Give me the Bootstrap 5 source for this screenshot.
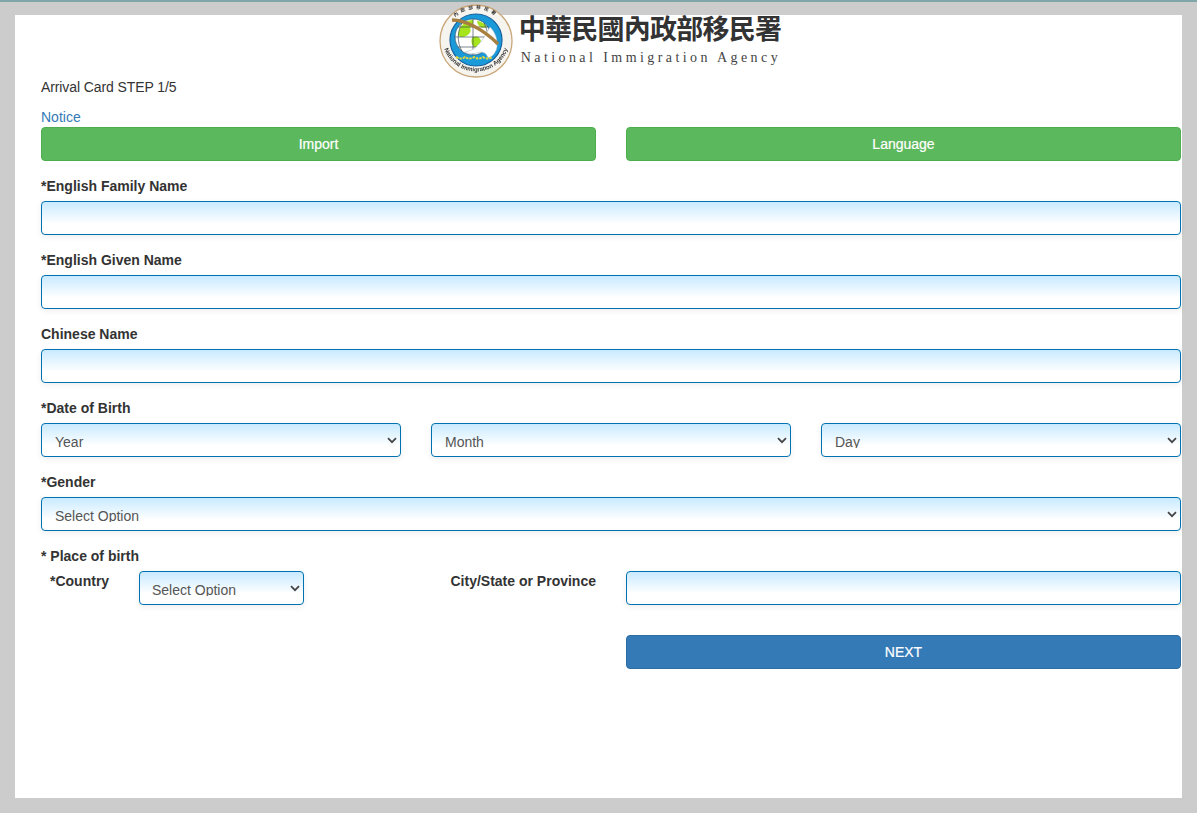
<!DOCTYPE html>
<html lang="en">
<head>
<meta charset="utf-8">
<title>Arrival Card</title>
<link rel="stylesheet" href="https://cdn.jsdelivr.net/npm/bootstrap@5.3.0/dist/css/bootstrap.min.css">
<style>
html, body { height: 100%; }
body { margin: 0; background: #ccc; font-family: "Liberation Sans", Arial, sans-serif; font-size: 14px; line-height: 20px; color: #333; border-top: 2px solid #7fa6a8; overflow: hidden; display: flow-root; }
.sheet { background: #fff; margin: 13px 15px 0; height: 783px; padding: 0 1px 0 26px; display: flow-root; }
.brand { margin: -11px 0 0 -2px; height: 73px; gap: 6px; }
.emblem { filter: blur(.35px); }
.brand-zh { font-family: "Noto Sans CJK TC", "Noto Sans CJK SC", sans-serif; font-size: 27px; line-height: 30px; font-weight: 700; letter-spacing: -.75px; color: #333; margin-top: 9px; white-space: nowrap; }
.brand-en { font-family: "Liberation Serif", serif; font-size: 14px; line-height: 16px; letter-spacing: 3.42px; color: #444; margin: 7px 0 0 2px; white-space: nowrap; }
.step-line { height: 20px; letter-spacing: -.1px; }
.notice-line { margin-top: 10px; height: 20px; }
.notice-line a { color: #337ab7; text-decoration: none; }
.form-row { --bs-gutter-x: 30px; --bs-gutter-y: 0; }
.act { display: block; width: 100%; height: 34px; padding: 6px 12px; font-size: 14px; line-height: 20px; border-radius: 4px; color: #fff; -webkit-text-stroke: .2px #fff; }
.act:hover, .act:focus { color: #fff; }
.act-green { background: #5cb85c; border: 1px solid #4cae4c; }
.act-blue { background: #337ab7; border: 1px solid #2e6da4; }
.block { margin-top: 15px; }
.field-label { display: block; margin: 0 0 5px; font-weight: 700; line-height: 20px; font-size: 14px; color: #333; }
.soft.form-control, .soft.form-select { height: 34px; min-height: 34px; font-size: 14px; color: #555; border: 1px solid #0072b1; border-radius: 4px; box-shadow: 0 2px 6px rgba(0,0,0,.07); }
.soft.form-control { padding: 6px 12px; background: linear-gradient(to bottom, #c8eaff 0%, #fff 68%); }
.soft.form-select { padding: 11px 24px 8px 13px; line-height: 14px; background-color: #fff; background-image: url("data:image/svg+xml,%3Csvg xmlns='http://www.w3.org/2000/svg' viewBox='0 0 10 7'%3E%3Cpath d='M1 1.2l4 4 4-4' fill='none' stroke='%23444' stroke-width='1.7'/%3E%3C/svg%3E"), linear-gradient(to bottom, #c8eaff 0%, #fff 68%); background-repeat: no-repeat, no-repeat; background-position: right 3px center, 0 0; background-size: 10px 7px, 100% 100%; }
.origin-cell { padding-left: 9px; width: 98px; }
.soft.form-select.origin-pick { width: 165px; flex: none; padding-left: 12px; }
.city-label { text-align: right; margin: 0; }
.next-row { margin-top: 30px; }
</style>
</head>
<body>
<div class="sheet">
  <div class="brand d-flex justify-content-center">
    <svg class="emblem" width="74" height="74" viewBox="0 0 74 74" role="img" aria-label="National Immigration Agency emblem">
      <defs>
        <path id="arcLow" d="M3.5 34 A33.5 33.5 0 0 0 70.5 34"/>
        <path id="arcTop" d="M7 30 A30.5 30.5 0 0 1 67 30"/>
      </defs>
      <circle cx="37" cy="37" r="36" fill="#f6f4ee" stroke="#c9a77a" stroke-width="1.3"/>
      <circle cx="37" cy="36" r="26" fill="#1a9ad8" stroke="#15609f" stroke-width="1.2"/>
      <circle cx="34" cy="33" r="18" fill="#fff" stroke="#27506f" stroke-width=".7"/>
      <path d="M19 31c1-9 8-15 15-15 1 3-1 6-3 8 2 3-1 7-4 8-3 1-6 2-8-1zM33 34c4-3 8-1 9 3-1 4-4 7-7 6-3-3-3-6-2-9zM38 17c4 0 8 3 10 6-3 1-6 1-8-1-1-2-2-3-2-5z" fill="#a6e41e"/>
      <path d="M16 33h36M34 15v36M23 19c-5 9-5 20 0 28M45 19c5 9 5 20 0 28M19 23h30M19 43h30" fill="none" stroke="#234" stroke-width=".6"/>
      <path d="M39 41c6-6 9-13 12-18 5 5 8 12 7 20-1 6-5 10-9 11-1-4-4-6-8-6-3 1-9 3-15 0 5-1 10-3 13-7z" fill="#fff" stroke="#9fb4c2" stroke-width=".5"/>
      <path d="M13 16c12 0 30 8 46 24" fill="none" stroke="#a97f3f" stroke-width="3.4"/>
      <path d="M17 53c4 2 6 2 9 0 3 2 6 2 9 0 3 2 6 2 9 0 3 2 6 2 9 0" fill="none" stroke="#e4d63a" stroke-width="2" stroke-dasharray="2.5 1"/>
      <text font-family="Liberation Sans, sans-serif" font-size="6" font-weight="700" fill="#333"><textPath href="#arcLow" startOffset="50%" text-anchor="middle">National Immigration Agency</textPath></text>
      <text font-family="Noto Sans CJK TC, sans-serif" font-size="4.6" font-weight="700" fill="#333" letter-spacing="3"><textPath href="#arcTop" startOffset="50%" text-anchor="middle">內政部移民署</textPath></text>
    </svg>
    <div>
      <div class="brand-zh">中華民國內政部移民署</div>
      <div class="brand-en">National Immigration Agency</div>
    </div>
  </div>

  <div class="step-line">Arrival Card STEP 1/5</div>
  <div class="notice-line"><a href="#">Notice</a></div>

  <div class="row form-row">
    <div class="col-6"><button type="button" class="btn act act-green">Import</button></div>
    <div class="col-6"><button type="button" class="btn act act-green">Language</button></div>
  </div>

  <div class="block">
    <label class="field-label" for="fam">*English Family Name</label>
    <input id="fam" class="form-control soft" type="text">
  </div>
  <div class="block">
    <label class="field-label" for="giv">*English Given Name</label>
    <input id="giv" class="form-control soft" type="text">
  </div>
  <div class="block">
    <label class="field-label" for="chi">Chinese Name</label>
    <input id="chi" class="form-control soft" type="text">
  </div>

  <div class="block">
    <label class="field-label">*Date of Birth</label>
    <div class="row form-row">
      <div class="col-4"><select class="form-select soft"><option>Year</option></select></div>
      <div class="col-4"><select class="form-select soft"><option>Month</option></select></div>
      <div class="col-4"><select class="form-select soft"><option>Day</option></select></div>
    </div>
  </div>

  <div class="block">
    <label class="field-label" for="gen">*Gender</label>
    <select id="gen" class="form-select soft"><option>Select Option</option></select>
  </div>

  <div class="block">
    <label class="field-label">* Place of birth</label>
    <div class="row form-row">
      <div class="col-6 d-flex">
        <label class="field-label origin-cell" for="ctry">*Country</label>
        <select id="ctry" class="form-select soft origin-pick"><option>Select Option</option></select>
        <label class="field-label city-label flex-grow-1" for="city">City/State or Province</label>
      </div>
      <div class="col-6"><input id="city" class="form-control soft" type="text"></div>
    </div>
  </div>

  <div class="row form-row next-row">
    <div class="col-6 offset-6"><button type="button" class="btn act act-blue">NEXT</button></div>
  </div>
</div>
<script src="https://cdn.jsdelivr.net/npm/bootstrap@5.3.0/dist/js/bootstrap.bundle.min.js"></script>
</body>
</html>
